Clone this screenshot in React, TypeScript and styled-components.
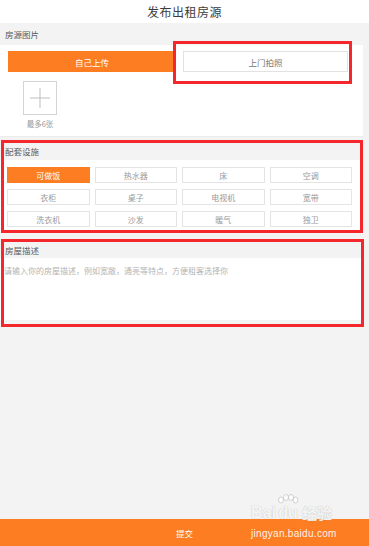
import React from "react";
import styled, { createGlobalStyle, css } from "styled-components";

const GlobalStyle = createGlobalStyle`
  html, body { margin: 0; padding: 0; background: #f3f3f3; }
  body { font-family: "Noto Sans CJK SC", "Noto Sans", sans-serif; }
  * { box-sizing: border-box; }
`;

const ORANGE = "#fd7d22";
const RED = "#f4272c";

const Page = styled.div`
  position: relative;
  width: 369px;
  height: 546px;
  display: flex;
  flex-direction: column;
  background: #f3f3f3;
  overflow: hidden;
`;

const Header = styled.header`
  height: 23px;
  background: #fff;
  display: flex;
  align-items: center;
  justify-content: center;
  font-size: 12px;
  font-weight: 400;
  color: #3c3c3c;
  letter-spacing: 0.5px;
`;

const Highlight = css`
  &::after {
    content: "";
    position: absolute;
    border: 3px solid ${RED};
    pointer-events: none;
  }
`;

const Section = styled.section<{ $mark?: "facilities" | "desc"; $gap?: number }>`
  position: relative;
  width: 363px;
  margin-top: ${(p) => p.$gap ?? 0}px;
  ${(p) => p.$mark && Highlight}
  ${(p) =>
    p.$mark === "facilities" &&
    css`
      &::after { top: -2px; left: 1px; right: 0; bottom: -1px; }
    `}
  ${(p) =>
    p.$mark === "desc" &&
    css`
      &::after { top: -3px; left: 1px; right: -1px; bottom: -3px; }
    `}
`;

const SectionLabel = styled.div<{ $h: number }>`
  height: ${(p) => p.$h}px;
  display: flex;
  align-items: center;
  padding-left: 5px;
  font-size: 8.5px;
  color: #5a5a5a;
`;

const Panel = styled.div`
  background: #fff;
`;

const PhotoPanel = styled(Panel)`
  height: 92px;
  padding: 6px 0 0 8px;
  border-bottom: 1px solid #ececec;
`;

const ModeRow = styled.div`
  display: grid;
  grid-template-columns: 168px 165px;
  column-gap: 7px;
`;

const ModeWrap = styled.div<{ $marked?: boolean }>`
  position: relative;
  ${(p) =>
    p.$marked &&
    css`
      ${Highlight}
      &::after { top: -10px; left: -10px; right: -4px; bottom: -12px; }
    `}
`;

const ModeButton = styled.div<{ $active?: boolean }>`
  height: 21px;
  display: flex;
  align-items: center;
  justify-content: center;
  font-size: 8.5px;
  background: ${(p) => (p.$active ? ORANGE : "#fff")};
  color: ${(p) => (p.$active ? "#fff" : "#777")};
  border: 1px solid ${(p) => (p.$active ? ORANGE : "#e2e2e2")};
`;

const AddBlock = styled.div`
  margin: 9px 0 0 15px;
  width: 34px;
  display: flex;
  flex-direction: column;
  align-items: center;
`;

const AddBox = styled.div`
  width: 34px;
  height: 34px;
  border: 1px solid #d4d4d4;
  display: flex;
  align-items: center;
  justify-content: center;
`;

const AddCaption = styled.div`
  margin-top: 3px;
  font-size: 7.5px;
  color: #999;
  white-space: nowrap;
`;

const FacilityPanel = styled(Panel)`
  padding: 7px 11px 5px 7px;
  display: grid;
  grid-template-columns: repeat(4, 1fr);
  column-gap: 5px;
  row-gap: 6px;
`;

const Tag = styled.div<{ $active?: boolean }>`
  height: 16px;
  display: flex;
  align-items: center;
  justify-content: center;
  font-size: 8px;
  background: ${(p) => (p.$active ? ORANGE : "#fff")};
  color: ${(p) => (p.$active ? "#fff" : "#999")};
  border: 1px solid ${(p) => (p.$active ? ORANGE : "#e4e4e4")};
`;

const DescArea = styled.textarea`
  display: block;
  width: 100%;
  height: 62px;
  border: none;
  outline: none;
  resize: none;
  background: #fff;
  padding: 7px 4px;
  font-family: inherit;
  font-size: 8px;
  color: #666;
  &::placeholder { color: #b4b4b4; }
`;

const DescFooter = styled.div`
  height: 4px;
  background: #f3f5f5;
`;

const Footer = styled.footer`
  margin-top: auto;
  height: 27px;
  background: ${ORANGE};
  display: flex;
  align-items: center;
  justify-content: center;
  color: #fff;
  font-size: 8.5px;
`;

const Watermark = styled.div`
  position: absolute;
  left: 251px;
  top: 494px;
  display: flex;
  flex-direction: column;
  align-items: flex-start;
  pointer-events: none;
`;

const WmLogo = styled.div`
  display: flex;
  align-items: flex-end;
  font-family: "Liberation Sans", Arial, sans-serif;
  font-weight: bold;
  font-size: 16px;
  color: rgba(255, 255, 255, 0.9);
  text-shadow: 0 0 1px rgba(140, 140, 140, 0.7);
  line-height: 18px;
`;

const WmPaw = styled.span`
  position: relative;
  display: inline-flex;
  flex-direction: column;
  align-items: center;
  margin-left: 1px;
`;

const WmCjk = styled.span`
  margin-left: 3px;
  font-family: "Noto Sans CJK SC", sans-serif;
  font-size: 15px;
`;

const WmUrl = styled.div`
  margin-top: 6px;
  font-family: "Liberation Sans", Arial, sans-serif;
  font-size: 10px;
  color: rgba(255, 255, 255, 0.92);
  letter-spacing: 0.3px;
`;

const facilities = [
  "可做饭", "热水器", "床", "空调",
  "衣柜", "桌子", "电视机", "宽带",
  "洗衣机", "沙发", "暖气", "独卫",
];

export default function App() {
  return (
    <>
      <GlobalStyle />
      <Page>
        <Header>发布出租房源</Header>

        <Section>
          <SectionLabel $h={22}>房源图片</SectionLabel>
          <PhotoPanel>
            <ModeRow>
              <ModeWrap>
                <ModeButton $active>自己上传</ModeButton>
              </ModeWrap>
              <ModeWrap $marked>
                <ModeButton>上门拍照</ModeButton>
              </ModeWrap>
            </ModeRow>
            <AddBlock>
              <AddBox>
                <svg width="22" height="22" viewBox="0 0 22 22">
                  <path d="M11 1v20M1 11h20" stroke="#bdbdbd" strokeWidth="1" fill="none" />
                </svg>
              </AddBox>
              <AddCaption>最多6张</AddCaption>
            </AddBlock>
          </PhotoPanel>
        </Section>

        <Section $mark="facilities" $gap={5}>
          <SectionLabel $h={18}>配套设施</SectionLabel>
          <FacilityPanel>
            {facilities.map((f, i) => (
              <Tag key={f} $active={i === 0}>{f}</Tag>
            ))}
          </FacilityPanel>
        </Section>

        <Section $mark="desc" $gap={10}>
          <SectionLabel $h={16}>房屋描述</SectionLabel>
          <DescArea placeholder="请输入你的房屋描述，例如宽敞，通亮等特点，方便租客选择你" />
          <DescFooter />
        </Section>

        <Footer>提交</Footer>

        <Watermark>
          <WmLogo>
            Bai
            <WmPaw>
              <svg width="22" height="10" viewBox="0 0 22 10">
                <g fill="rgba(255,255,255,0.9)" stroke="rgba(140,140,140,0.6)" strokeWidth="0.6">
                  <ellipse cx="4" cy="6" rx="2.4" ry="3" />
                  <ellipse cx="9" cy="3.5" rx="2.4" ry="3" />
                  <ellipse cx="14" cy="3.5" rx="2.4" ry="3" />
                  <ellipse cx="18.5" cy="6" rx="2.4" ry="3" />
                </g>
              </svg>
              du
            </WmPaw>
            <WmCjk>经验</WmCjk>
          </WmLogo>
          <WmUrl>jingyan.baidu.com</WmUrl>
        </Watermark>
      </Page>
    </>
  );
}
